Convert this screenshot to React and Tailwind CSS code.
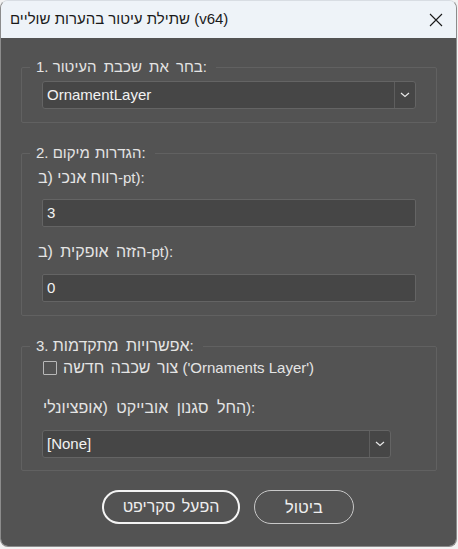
import React from "react";

function Chevron() {
  return (
    <svg width="10" height="6" viewBox="0 0 10 6" fill="none">
      <path d="M1 1 L5 4.5 L9 1" stroke="#e8e8e8" strokeWidth="1.2" />
    </svg>
  );
}

function Select({ value, widthClass }) {
  return (
    <div className={`flex h-[28px] ${widthClass} rounded-[3px] border border-[#646464] bg-[#464646]`}>
      <div className="flex flex-1 items-center pl-[4px] text-[15px] text-[#f2f2f2]">{value}</div>
      <div className="flex w-[21px] items-center justify-center border-l border-[#5e5e5e]">
        <Chevron />
      </div>
    </div>
  );
}

function Input({ value }) {
  return (
    <div className="flex h-[28px] w-full items-center rounded-[2px] border border-[#646464] bg-[#464646] pl-[4px] text-[15px] text-[#f2f2f2]">
      {value}
    </div>
  );
}

function Group({ title, children, className }) {
  return (
    <fieldset className={`rounded-[2px] border border-[#616161] ${className || ""}`}>
      <legend className="ml-[8px] pl-[6px] pr-[9px] text-[15px] leading-[18px] text-[#e4e4e4]">{title}</legend>
      {children}
    </fieldset>
  );
}

export default function App() {
  return (
    <div className="h-[549px] w-[458px] bg-[#f2f2f2] font-['Liberation_Sans',sans-serif]">
      <div className="flex h-[547px] w-[457px] flex-col overflow-hidden rounded-[8px] border border-[#8c8c8c] border-t-[#d8dde3]">
        <div className="flex h-[37px] shrink-0 items-center justify-between bg-[#eef3f8] pl-[9px] pr-[13px]">
          <span className="text-[15px] text-[#1a1a1a]">שתילת עיטור בהערות שוליים (v64)</span>
          <svg width="14" height="14" viewBox="0 0 14 14">
            <path d="M1 1 L13 13 M13 1 L1 13" stroke="#1a1a1a" strokeWidth="1.1" />
          </svg>
        </div>
        <div className="flex flex-1 flex-col bg-[#535353] pl-[20px] pr-[19px] pt-[20px]">
          <Group title={<>1. <span className="text-[15px] [word-spacing:3px]">בחר את שכבת העיטור</span>:</>}>
            <div className="px-[20px] pb-[13px] pt-[5px]">
              <Select value="OrnamentLayer" widthClass="w-full" />
            </div>
          </Group>
          <Group title={<>2. <span className="text-[15px] [word-spacing:1px]">הגדרות מיקום</span>:</>} className="mt-[21px]">
            <div className="flex flex-col px-[20px] pb-[13px] pt-[7px]">
              <div className="-ml-[4px] text-[15px] leading-[18px] text-[#e4e4e4]">
                <bdi dir="rtl" className="text-[16px]">רווח אנכי (ב</bdi>-pt):
              </div>
              <div className="mt-[12px]">
                <Input value="3" />
              </div>
              <div className="mt-[16px] -ml-[4px] text-[15px] leading-[18px] text-[#e4e4e4]">
                <bdi dir="rtl" className="text-[16px] [word-spacing:3px]">הזזה אופקית (ב</bdi>-pt):
              </div>
              <div className="mt-[13px]">
                <Input value="0" />
              </div>
            </div>
          </Group>
          <Group title={<>3. <span className="text-[16px] [word-spacing:3px]">אפשרויות מתקדמות</span>:</>} className="mt-[21px]">
            <div className="flex flex-col px-[20px] pb-[12px] pt-[4px]">
              <div className="flex h-[18px] items-center gap-[6px] pl-[1px]">
                <div className="h-[14px] w-[14px] rounded-[1px] border border-[#b8b8b8]" />
                <span className="text-[15px] leading-[18px] text-[#e4e4e4]">
                  <span className="text-[16px] [word-spacing:2px]">צור שכבה חדשה</span> ('Ornaments Layer')
                </span>
              </div>
              <div className="mt-[22px] pl-[1px] text-[15px] leading-[18px] text-[#e4e4e4]">
                <bdi dir="rtl" className="text-[16px] [word-spacing:4px]">החל סגנון אובייקט (אופציונלי</bdi>):
              </div>
              <div className="mt-[13px]">
                <Select value="[None]" widthClass="w-[349px]" />
              </div>
            </div>
          </Group>
          <div className="mt-[19px] flex justify-center gap-[14px] pr-[2px]">
            <button className="flex h-[34px] w-[138px] items-center justify-center rounded-full border-2 border-[#f4f4f4] text-[16px] text-[#eeeeee] [word-spacing:2px]">
              הפעל סקריפט
            </button>
            <button className="flex h-[34px] w-[100px] items-center justify-center rounded-full border border-[#c8c8c8] text-[16.5px] text-[#eeeeee]">
              ביטול
            </button>
          </div>
        </div>
      </div>
    </div>
  );
}
